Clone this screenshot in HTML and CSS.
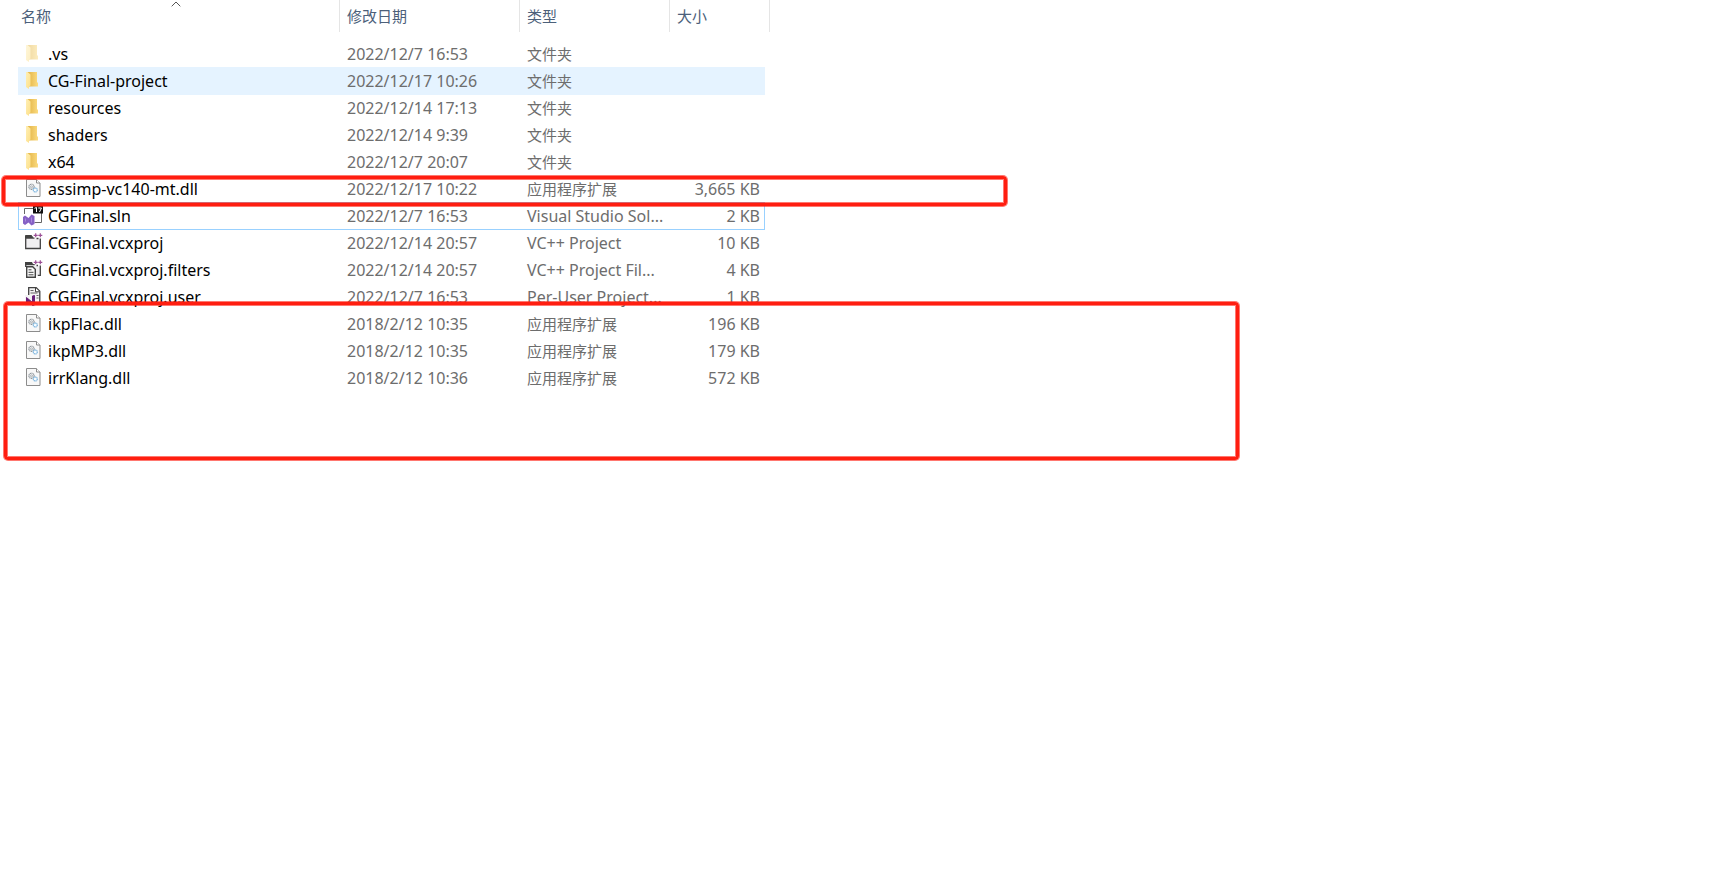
FILE: index.html
```html
<!DOCTYPE html>
<html lang="zh-CN">
<head>
<meta charset="utf-8">
<title>CGFinal</title>
<link rel="stylesheet" href="styles.css">
</head>
<body>
<svg class="defs" aria-hidden="true">
  <defs>
    <linearGradient id="fold-front" x1="0" y1="0" x2="1" y2="1">
      <stop offset="0" stop-color="#ffefb5"/><stop offset="1" stop-color="#fddf86"/>
    </linearGradient>
    <linearGradient id="fold-back" x1="0" y1="0" x2="1" y2="0">
      <stop offset="0.200" stop-color="#e6b94e"/><stop offset="1" stop-color="#fbdb80"/>
    </linearGradient>
    <symbol id="folder" viewBox="0 0 22 20">
      <path d="M5 1h10v10l1 1v3.500H7z" fill="url(#fold-back)"/>
      <path d="M4 1h1.500l3 2.500v11l-1.500 1v2.500L4 16z" fill="url(#fold-front)"/>
    </symbol>
    <symbol id="dll" viewBox="0 0 22 20">
      <path d="M4.500.5h10l3.500 3.500v13.500h-13.500z" fill="#f8f8f8" stroke="#8c8c8c"/>
      <path d="M14.500.5v3.500h3.500" fill="#fff" stroke="#8c8c8c"/>
      <circle cx="9.500" cy="7.800" r="2.600" fill="#f8f8f8" stroke="#8f969c" stroke-width="1.200" stroke-dasharray="1.200 .5"/>
      <circle cx="9.500" cy="7.800" r="1" fill="none" stroke="#8f969c" stroke-width=".7"/>
      <circle cx="13.300" cy="11" r="2" fill="#f8fcff" stroke="#74b0dc" stroke-width="1.200" stroke-dasharray="1.200 .4"/>
    </symbol>
    <symbol id="sln" viewBox="0 0 22 20">
      <path d="M2.500 2.500h17v14h-17z" fill="#fff" stroke="#666"/>
      <path d="M0 8h12.500v12H0z" fill="#fff"/>
      <path d="M11 0H21v7.500H11z" fill="#111"/>
      <path d="M12.500 2.300l2-.8v4.500M16.300 2h3.200l-2 4" fill="none" stroke="#fff"/>
      <path d="M1 11l2-1.500 3.500 2.500L9.500 8.500l3 1.500v8l-3 1.500-3-3L3 19l-2-1.500z" fill="#8661c5"/>
      <path d="M3.500 12.500v3M9.500 11.500v5" stroke="#a98ada" fill="none"/>
    </symbol>
    <symbol id="plus" viewBox="0 0 22 20">
      <path d="M11.700 2.300h4M13.700.3v4M16.300 2.300h4M18.300.3v4" fill="none" stroke="#9b4f96" stroke-width="1.200"/>
    </symbol>
    <symbol id="vcx" viewBox="0 0 22 20">
      <path d="M3.500 5V2.500h6L11 5" fill="#424242" stroke="#424242"/>
      <path d="M3.700 5.500h14.600v10H3.700z" fill="#f0eff1"/>
      <path d="M11.500 5.200H3.700v10.300h14.600V5.500M11 5.200h1.500M14.500 5.500h2" fill="none" stroke="#424242" stroke-width="1.300"/>
      <use href="#plus"/>
    </symbol>
    <symbol id="filters" viewBox="0 0 22 20">
      <path d="M3 5V2h7l1.500 3z" fill="#424242"/>
      <path d="M9 5.500h9v10h-4V8z" fill="#f0eff1"/>
      <path d="M3.700 7V4.700h9M18.300 5.500v9.800h-2.500M14.500 5.500h1.500" fill="none" stroke="#424242" stroke-width="1.300"/>
      <path d="M4.700 6.700h6l2.600 2.600v8H4.700z" fill="#fafafa" stroke="#424242" stroke-width="1.400"/>
      <path d="M6.500 9.800h3M6.500 12.300h5M6.500 14.800h5" stroke="#424242"/>
      <use href="#plus"/>
    </symbol>
    <symbol id="user" viewBox="0 0 22 20">
      <path d="M6.700.7h7.500l3.600 3.600v13H6.700z" fill="#f4f4f4" stroke="#424242" stroke-width="1.300"/>
      <path d="M13.500 1v3.800h4" fill="#fff" stroke="#424242"/>
      <path d="M8.500 3.500h3M8.500 6h7M14.500 8.500h2M14.500 11h2" stroke="#666"/>
      <path d="M3 8h10.500v11.500H3z" fill="#f4f4f4"/>
      <path d="M4.500 16V10.500l6 5V9l2-.5V18l-2 .5-4-4z" fill="#68217a" stroke="#68217a"/>
    </symbol>
  </defs>
</svg>

<main class="explorer">
  <table class="files">
    <colgroup>
      <col class="col-name"><col class="col-date"><col class="col-type"><col class="col-size"><col class="col-end">
    </colgroup>
    <thead>
      <tr>
        <th aria-sort="ascending"><button class="head" type="button">名称<svg class="caret" viewBox="0 0 10 6" aria-hidden="true"><path d="M.7 5.300L5 1l4.300 4.300" fill="none" stroke="#555"/></svg></button></th>
        <th><button class="head" type="button">修改日期</button></th>
        <th><button class="head" type="button">类型</button></th>
        <th colspan="2"><button class="head" type="button">大小</button></th>
      </tr>
    </thead>
    <tbody>
      <tr class="hidden-item"><td><span class="file"><svg class="icon"><use href="#folder"/></svg>.vs</span></td><td>2022/12/7 16:53</td><td class="cjk">文件夹</td><td></td></tr>
      <tr class="hovered"><td><span class="file"><svg class="icon"><use href="#folder"/></svg>CG-Final-project</span></td><td>2022/12/17 10:26</td><td class="cjk">文件夹</td><td></td></tr>
      <tr><td><span class="file"><svg class="icon"><use href="#folder"/></svg>resources</span></td><td>2022/12/14 17:13</td><td class="cjk">文件夹</td><td></td></tr>
      <tr><td><span class="file"><svg class="icon"><use href="#folder"/></svg>shaders</span></td><td>2022/12/14 9:39</td><td class="cjk">文件夹</td><td></td></tr>
      <tr><td><span class="file"><svg class="icon"><use href="#folder"/></svg>x64</span></td><td>2022/12/7 20:07</td><td class="cjk">文件夹</td><td></td></tr>
      <tr><td><span class="file"><svg class="icon"><use href="#dll"/></svg>assimp-vc140-mt.dll</span></td><td>2022/12/17 10:22</td><td class="cjk">应用程序扩展</td><td>3,665 KB</td></tr>
      <tr class="focused"><td><span class="file"><svg class="icon"><use href="#sln"/></svg>CGFinal.sln</span></td><td>2022/12/7 16:53</td><td>Visual Studio Sol...</td><td>2 KB</td></tr>
      <tr><td><span class="file"><svg class="icon"><use href="#vcx"/></svg>CGFinal.vcxproj</span></td><td>2022/12/14 20:57</td><td>VC++ Project</td><td>10 KB</td></tr>
      <tr><td><span class="file"><svg class="icon"><use href="#filters"/></svg>CGFinal.vcxproj.filters</span></td><td>2022/12/14 20:57</td><td>VC++ Project Fil...</td><td>4 KB</td></tr>
      <tr><td><span class="file"><svg class="icon"><use href="#user"/></svg>CGFinal.vcxproj.user</span></td><td>2022/12/7 16:53</td><td>Per-User Project...</td><td>1 KB</td></tr>
      <tr><td><span class="file"><svg class="icon"><use href="#dll"/></svg>ikpFlac.dll</span></td><td>2018/2/12 10:35</td><td class="cjk">应用程序扩展</td><td>196 KB</td></tr>
      <tr><td><span class="file"><svg class="icon"><use href="#dll"/></svg>ikpMP3.dll</span></td><td>2018/2/12 10:35</td><td class="cjk">应用程序扩展</td><td>179 KB</td></tr>
      <tr><td><span class="file"><svg class="icon"><use href="#dll"/></svg>irrKlang.dll</span></td><td>2018/2/12 10:36</td><td class="cjk">应用程序扩展</td><td>572 KB</td></tr>
    </tbody>
  </table>
  <div class="mark mark-assimp"></div>
  <div class="mark mark-audio"></div>
</main>
</body>
</html>
```
FILE: styles.css
```css
body {
  margin: 0;
  background: #fff;
  color: #000;
  font: 16px/26px "Noto Sans", "Noto Sans CJK SC", sans-serif;
}

.defs {
  position: absolute;
  width: 0;
  height: 0;
}

.explorer {
  position: relative;
  min-height: 100vh;
  padding-left: 18px;
  box-sizing: border-box;
}

.files {
  width: 752px;
  table-layout: fixed;
  border-collapse: collapse;
}

.col-name { width: 322px; }
.col-date { width: 180px; }
.col-type { width: 150px; }
.col-size { width: 95px; }
.col-end { width: 5px; }

.files th {
  padding: 0 0 8px;
}

.head {
  position: relative;
  display: block;
  width: 100%;
  height: 32px;
  padding: 0 7px;
  border: 0;
  border-right: 1px solid #e5e5e5;
  background: none;
  color: #4c607a;
  font: 15px/32px "Noto Sans CJK SC", sans-serif;
  text-align: left;
}

th:first-child .head {
  padding-left: 3px;
}

.caret {
  position: absolute;
  top: 1px;
  left: 50%;
  width: 10px;
  height: 6px;
  margin-left: -8px;
}

.files td {
  height: 27px;
  padding: 0 0 0 7px;
  color: #6d6d6d;
  white-space: nowrap;
}

.files td:first-child {
  padding-left: 4px;
  color: #000;
}

.files td:nth-child(4) {
  padding: 0 5px 0 0;
  text-align: right;
}

.files td.cjk {
  font: 15px/26px "Noto Sans CJK SC", sans-serif;
}

.file {
  display: flex;
  align-items: center;
  gap: 4px;
}

.icon {
  width: 22px;
  height: 20px;
}

.hidden-item .icon {
  opacity: 0.5;
}

.hovered td {
  background: #e5f3ff;
  box-shadow: 0 1px #e5f3ff;
}

.focused td {
  box-shadow: inset 0 1px #99d1ff, 0 1px #99d1ff;
}

.focused td:first-child {
  box-shadow: inset 1px 1px #99d1ff, 0 1px #99d1ff;
}

.focused td:last-child {
  box-shadow: inset -1px 1px #99d1ff, 0 1px #99d1ff;
}

.mark {
  position: absolute;
  box-sizing: border-box;
  border: 3px solid #ff1e10;
  border-radius: 4px;
  box-shadow: 0 0 0 1px #ff1e1099, inset 0 0 0 1px #ff1e1099;
  pointer-events: none;
}

.mark-assimp {
  top: 176px;
  left: 2px;
  width: 1005px;
  height: 30px;
}

.mark-audio {
  top: 302px;
  left: 4px;
  width: 1235px;
  height: 158px;
}
```
